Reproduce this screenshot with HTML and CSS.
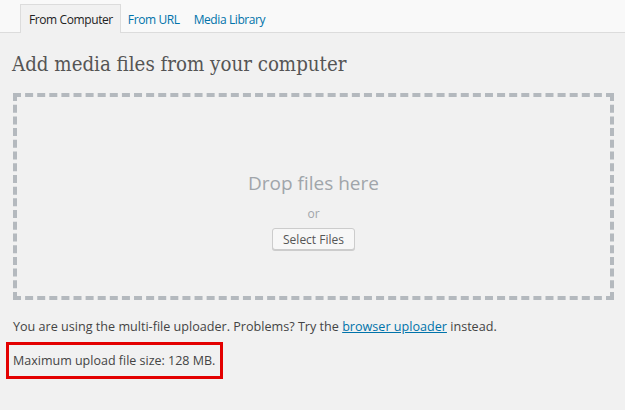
FILE: index.html
```html
<!DOCTYPE html>
<html lang="en">
<head>
  <meta charset="UTF-8" />
  <title>Upload New Media</title>
  <link rel="stylesheet" href="styles.css">
</head>
<body>
  <div class="tabs">
    <a class="tab current">From Computer</a>
    <a class="tab">From URL</a>
    <a class="tab">Media Library</a>
  </div>

  <div class="content">
    <h3 class="title">Add media files from your computer</h3>

    <div class="drop-area">
      <p class="drop-text">Drop files here</p>
      <p class="drop-or">or</p>
      <button type="button" class="select-btn">Select Files</button>
    </div>

    <p class="notice">You are using the multi-file uploader. Problems? Try the <a href="#">browser uploader</a> instead.</p>
    <div class="max-size">Maximum upload file size: 128 MB.</div>
  </div>
</body>
</html>
```

FILE: styles.css
```css
body {
  margin: 0;
  background: #f1f1f1;
  color: #444;
  font-family: "Open Sans", "Noto Sans", sans-serif;
  font-size: 12px;
}
.tabs {
  height: 33px;
  background: #f9f9f9;
  border-bottom: 1px solid #dcdcdc;
  display: flex;
  align-items: flex-end;
  padding-left: 20px;
  box-sizing: border-box;
}
.tab {
  display: block;
  padding: 0 6px;
  height: 28px;
  line-height: 29px;
  color: #0073aa;
  letter-spacing: -0.4px;
  margin-bottom: -1px;
  border: 1px solid transparent;
  border-bottom: none;
}
.tab.current {
  color: #222;
  background: #f1f1f1;
  border-color: #dcdcdc;
  padding: 0 7px 0 8px;
}
.content {
  padding: 0 11px 0 13px;
}
.title {
  font-family: "DejaVu Serif Condensed", "DejaVu Serif", serif;
  font-weight: normal;
  font-size: 20.3px;
  color: #555;
  margin: 19px 0 17px -1px;
}
.drop-area {
  height: 199px;
  border: 4px dashed #b4b9be;
  text-align: center;
  display: flex;
  flex-direction: column;
  align-items: center;
}
.drop-text {
  font-size: 19px;
  color: #a0a5aa;
  margin: 73px 0 0;
}
.drop-or {
  font-size: 12px;
  color: #a0a5aa;
  margin: 9px 0 6px;
}
.select-btn {
  font-family: inherit;
  font-size: 12px;
  color: #555;
  background: #f7f7f7;
  border: 1px solid #ccc;
  border-radius: 3px;
  box-shadow: 0 1px 0 #ccc;
  height: 22px;
  padding: 0 10px;
}
.notice {
  font-size: 12.6px;
  margin: 18px 0 0;
}
.notice a {
  color: #0073aa;
}
.max-size {
  font-size: 12.5px;
  margin: 7px 0 0 -7px;
  width: 207px;
  height: 31px;
  line-height: 31px;
  padding-left: 4px;
  border: 3px solid #e30000;
}
```
